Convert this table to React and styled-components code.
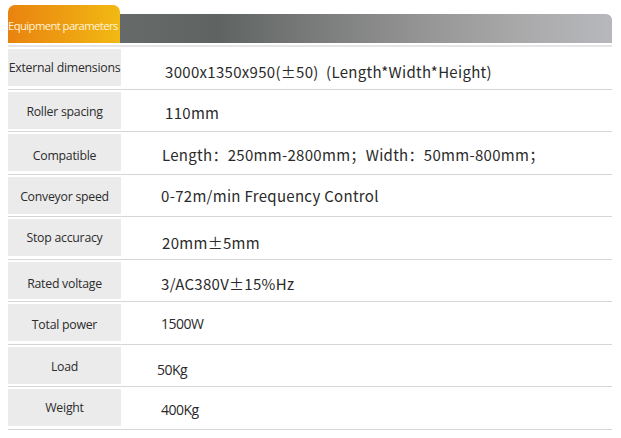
import React from "react";
import styled, { createGlobalStyle } from "styled-components";

const Global = createGlobalStyle`
	body {
		margin: 0;
		background: #fff;
	}
`;

const Page = styled.div`
	width: 604px;
	padding: 5px 0 0 8px;
`;

const Header = styled.div`
	display: flex;
	align-items: flex-end;
	height: 38px;
`;

const Tab = styled.div`
	width: 112px;
	height: 38px;
	border-radius: 7px 7px 0 0;
	background: linear-gradient(90deg, #e9830f 0%, #eea012 55%, #f2b913 100%);
	color: #fff4d8;
	font-family: "Open Sans", sans-serif;
	font-size: 11.3px;
	letter-spacing: -0.6px;
	display: flex;
	align-items: center;
	white-space: nowrap;
	overflow: hidden;
	padding-top: 2px;
	box-sizing: border-box;
`;

const Bar = styled.div`
	flex: 1;
	height: 29px;
	border-top-right-radius: 6px;
	background: linear-gradient(
		90deg,
		#666a68 0%,
		#5f6462 20%,
		#7a7c7b 40%,
		#959595 62%,
		#a8a8a9 80%,
		#b7b8bc 100%
	);
`;

const Rule = styled.div`
	height: 2px;
	margin-top: 2px;
	background: #e5e5e8;
`;

const Row = styled.div`
	display: flex;
	padding: 2px 0 2.5px;
	border-bottom: 1px solid #d6d6d6;
`;

const Label = styled.div`
	width: 113px;
	height: 37px;
	flex-shrink: 0;
	background: #ebebeb;
	display: flex;
	align-items: center;
	justify-content: center;
	padding-top: ${(props) => props.dy}px;
	box-sizing: border-box;
	font-family: "Open Sans", sans-serif;
	font-size: 12.3px;
	letter-spacing: -0.25px;
	color: #2c2c2c;
	white-space: nowrap;
`;

const Value = styled.div`
	display: flex;
	align-items: center;
	padding-left: ${(props) => props.dx}px;
	padding-top: ${(props) => props.dy}px;
	font-family: ${(props) =>
		props.plain
			? `"Open Sans", sans-serif`
			: `"Noto Sans CJK SC", sans-serif`};
	font-size: ${(props) => (props.plain ? "14px" : "15px")};
	letter-spacing: ${(props) => (props.plain ? "-0.5px" : "0.3px")};
	color: #2a2a2a;
	white-space: pre;
`;

const rows = [
	{ label: "External dimensions", ly: -1, value: "3000x1350x950(±50)  (Length*Width*Height)", dx: 44, dy: 7 },
	{ label: "Roller spacing", ly: 3, value: "110mm", dx: 44, dy: 4 },
	{ label: "Compatible", ly: 5, value: "Length：250mm-2800mm；Width：50mm-800mm；", dx: 41, dy: 3 },
	{ label: "Conveyor speed", ly: 2, value: "0-72m/min Frequency Control", dx: 40, dy: 0 },
	{ label: "Stop accuracy", ly: -3, value: "20mm±5mm", dx: 41, dy: 9 },
	{ label: "Rated voltage", ly: 6, value: "3/AC380V±15%Hz", dx: 40, dy: 7 },
	{ label: "Total power", ly: 4, value: "1500W", dx: 40, dy: 2, plain: true },
	{ label: "Load", ly: 2, value: "50Kg", dx: 36, dy: 9, plain: true },
	{ label: "Weight", ly: 0, value: "400Kg", dx: 40, dy: 4, plain: true },
];

const App = () => {
	return (
		<Page>
			<Global />
			<Header>
				<Tab>Equipment parameters</Tab>
				<Bar />
			</Header>
			<Rule />
			{rows.map((row) => (
				<Row key={row.label}>
					<Label dy={row.ly}>{row.label}</Label>
					<Value dx={row.dx} dy={row.dy} plain={row.plain}>
						{row.value}
					</Value>
				</Row>
			))}
		</Page>
	);
};

export default App;
